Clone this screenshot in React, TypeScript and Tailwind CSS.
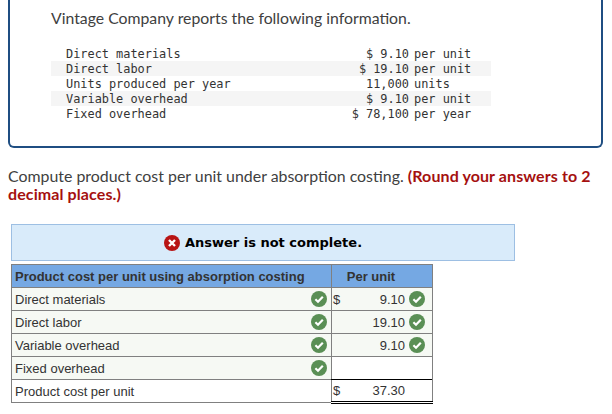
import React from 'react';

const infoRows = [
  { label: 'Direct materials', value: '$ 9.10', unit: 'per unit' },
  { label: 'Direct labor', value: '$ 19.10', unit: 'per unit' },
  { label: 'Units produced per year', value: '11,000', unit: 'units' },
  { label: 'Variable overhead', value: '$ 9.10', unit: 'per unit' },
  { label: 'Fixed overhead', value: '$ 78,100', unit: 'per year' },
];

const answerRows = [
  { label: 'Direct materials', dollar: true, amount: '9.10', ok: true, amountOk: true },
  { label: 'Direct labor', dollar: false, amount: '19.10', ok: true, amountOk: true },
  { label: 'Variable overhead', dollar: false, amount: '9.10', ok: true, amountOk: true },
  { label: 'Fixed overhead', dollar: false, amount: '', ok: true, amountOk: false },
];

const CheckBadge = () => (
  <svg width="16" height="16" viewBox="0 0 16 16" className="block">
    <circle cx="8" cy="8" r="8" fill="#5a8f55" />
    <path d="M4.4 8.3 L7 10.8 L11.8 5.8" fill="none" stroke="#ffffff" strokeWidth="2.2" />
  </svg>
);

const CrossBadge = () => (
  <svg width="16" height="16" viewBox="0 0 16 16" className="block">
    <circle cx="8" cy="8" r="8" fill="#b81414" />
    <path d="M5 5 L11 11 M11 5 L5 11" fill="none" stroke="#ffffff" strokeWidth="2.4" />
  </svg>
);

const App: React.FC = () => {
  return (
    <div className="w-[612px] h-[414px] overflow-hidden bg-white font-['Lato',sans-serif] text-[#404040]">
      <div className="ml-[8px] w-[595px] h-[148px] border-x-2 border-b-2 border-[#1f4e82] rounded-b-[6px] pl-[41px] pt-[8px]">
        <p className="text-[15.8px] leading-[20px]">Vintage Company reports the following information.</p>
        <div className="mt-[18px] w-[440px] font-['DejaVu_Sans_Mono',monospace] text-[11.9px] leading-[15px] text-[#333]">
          {infoRows.map((row, i) => (
            <div key={row.label} className={`flex h-[15px] pl-[15px] pt-[1px] ${i % 2 === 1 ? 'bg-[#f5f5f5]' : ''}`}>
              <span className="w-[240px]">{row.label}</span>
              <span className="w-[103px] text-right whitespace-pre">{row.value}</span>
              <span className="ml-[5px]">{row.unit}</span>
            </div>
          ))}
        </div>
      </div>

      <div className="ml-[8px] mt-[19px] w-[596px] text-[15.9px] leading-[18px]">
        Compute product cost per unit under absorption costing.{' '}
        <strong className="font-bold text-[16px] tracking-[0.1px] text-[#a5100f]">(Round your answers to 2 decimal places.)</strong>
      </div>

      <div className="ml-[11px] mt-[21px] w-[504px] h-[37px] flex items-center justify-center gap-[5px] bg-[#d9ebfa] border border-[#9dbfe3]">
        <CrossBadge />
        <span className="pt-[1px] font-['DejaVu_Sans',sans-serif] font-bold text-[13px] text-black">Answer is not complete.</span>
      </div>

      <table className="ml-[11px] mt-[3px] w-[421px] table-fixed border-collapse font-['Liberation_Sans',sans-serif] text-[13px] text-[#333]">
        <colgroup>
          <col className="w-[320px]" />
          <col className="w-[101px]" />
        </colgroup>
        <thead>
          <tr className="h-[23px] bg-[#75a8e3]">
            <th className="border border-[#808080] p-0 pt-[1px] pl-[3px] text-left font-bold">Product cost per unit using absorption costing</th>
            <th className="border border-[#808080] p-0 pt-[1px] pr-[22px] font-bold">Per unit</th>
          </tr>
        </thead>
        <tbody>
          {answerRows.map(row => (
            <tr key={row.label} className="h-[23px]">
              <td className="border border-[#808080] bg-[#f6f9f4] p-0 pl-[3px] pr-[4px]">
                <div className="flex items-center justify-between">
                  <span className="pt-[1px]">{row.label}</span>
                  {row.ok && <CheckBadge />}
                </div>
              </td>
              <td className={`border border-[#808080] p-0 pl-[1px] pr-[4px] ${row.amount ? 'bg-[#f6f9f4]' : 'bg-white'}`}>
                <div className="flex items-center">
                  <span className="w-[10px] pt-[1px]">{row.dollar ? '$' : ''}</span>
                  <span className="w-[62px] pt-[1px] text-right">{row.amount}</span>
                  <span className="ml-[4px]">{row.amountOk && <CheckBadge />}</span>
                </div>
              </td>
            </tr>
          ))}
          <tr className="h-[23px]">
            <td className="border border-[#808080] p-0 pt-[1px] pl-[3px]">Product cost per unit</td>
            <td className="border-x border-x-[#808080] border-t border-t-black border-b-[3px] border-b-black border-double p-0 pl-[1px]">
              <div className="flex items-center">
                <span className="w-[10px] pt-[1px]">$</span>
                <span className="w-[62px] pt-[1px] text-right">37.30</span>
              </div>
            </td>
          </tr>
        </tbody>
      </table>
    </div>
  );
};

export default App;
